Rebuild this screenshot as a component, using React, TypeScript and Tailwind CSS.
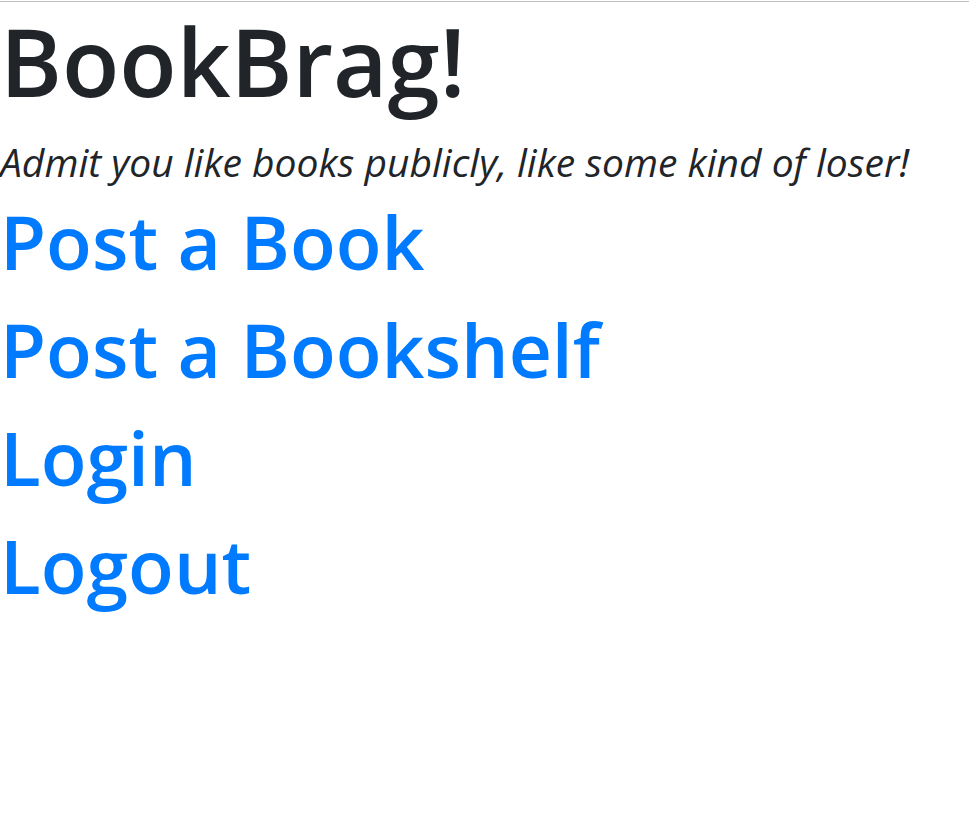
import React from "react";

export default function App() {
  const font = { fontFamily: '"Open Sans", "Noto Sans", sans-serif' };
  return (
    <div className="min-h-[840px] bg-white" style={font}>
      <div className="h-px bg-white" />
      <div className="h-px bg-[#c0c0c0]" />
      <h1 className="text-[94px] font-semibold leading-[119px] text-[#212529] mb-4">BookBrag!</h1>
      <p className="text-[39px] italic text-[#212529] leading-[50px]">Admit you like books publicly, like some kind of loser!</p>
      <div className="flex flex-col items-start">
        <a href="#" className="text-[75px] font-semibold text-[#007bff] leading-[108px]">Post a Book</a>
        <a href="#" className="text-[75px] font-semibold text-[#007bff] leading-[108px]">Post a Bookshelf</a>
        <a href="#" className="text-[75px] font-semibold text-[#007bff] leading-[108px]">Login</a>
        <a href="#" className="text-[75px] font-semibold text-[#007bff] leading-[108px]">Logout</a>
      </div>
    </div>
  );
}
